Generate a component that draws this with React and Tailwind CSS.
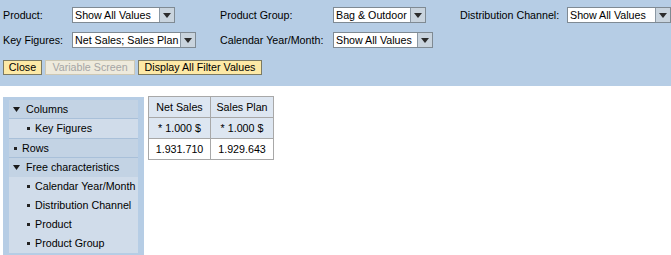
import React from 'react';

const Select = ({ value, width }) => (
  <div className={`flex h-[16px] border border-[#7f8a93] bg-white ${width}`}>
    <div className="flex-1 overflow-hidden whitespace-nowrap pl-[2px] leading-[14px] text-black">{value}</div>
    <div className="flex w-[15px] items-center justify-center border-l border-[#8b98a4] bg-[#c9d4de]">
      <svg width="8" height="5" viewBox="0 0 8 5">
        <path d="M0 0h8L4 5z" fill="#2b2b2b" />
      </svg>
    </div>
  </div>
);

const Arrow = () => (
  <svg width="7" height="5" viewBox="0 0 7 5" className="mr-[6px]">
    <path d="M0 0h7L3.5 5z" fill="#1a1a1a" />
  </svg>
);

const Dot = () => <span className="mr-[5px] inline-block h-[3px] w-[3px] bg-[#222]" />;

const TreeHeader = ({ label, open, last }) => (
  <div className={`flex h-[19px] items-center whitespace-nowrap bg-[#c3d3e4] ${open ? 'pl-[4px]' : 'pl-[5px]'} ${last ? '' : 'border-b border-[#a9c0d9]'}`}>
    {open ? <Arrow /> : <Dot />}
    <span>{label}</span>
  </div>
);

const TreeItem = ({ label }) => (
  <div className="flex h-[19px] items-center whitespace-nowrap bg-[#d0dcea] pl-[18px]">
    <Dot />
    <span>{label}</span>
  </div>
);

export default function App() {
  return (
    <div className="h-[255px] w-[671px] bg-white text-[10.7px] text-black" style={{ fontFamily: '"Liberation Sans", Arial, sans-serif' }}>
      {/* filter area */}
      <div className="h-[86px] bg-[#b6cde5] pl-[3px] pt-[7px]">
        <div className="flex h-[16px] items-center whitespace-nowrap">
          <div className="w-[69px]">Product:</div>
          <div className="w-[148px]"><Select value="Show All Values" width="w-[103px]" /></div>
          <div className="w-[113px]">Product Group:</div>
          <div className="w-[127px]"><Select value="Bag & Outdoor" width="w-[93px]" /></div>
          <div className="w-[107px]">Distribution Channel:</div>
          <Select value="Show All Values" width="w-[104px]" />
        </div>
        <div className="mt-[9px] flex h-[16px] items-center whitespace-nowrap">
          <div className="w-[69px]">Key Figures:</div>
          <div className="w-[148px]"><Select value="Net Sales; Sales Plan" width="w-[124px]" /></div>
          <div className="w-[113px]">Calendar Year/Month:</div>
          <Select value="Show All Values" width="w-[100px]" />
        </div>
        <div className="mt-[12px] flex gap-[3px] whitespace-nowrap">
          <div className="h-[15px] w-[39px] border border-[#7c7a62] bg-[#fde9a6] text-center leading-[13px]">Close</div>
          <div className="h-[15px] w-[90px] border border-[#cdc8b4] bg-[#eeeadc] text-center leading-[13px] text-[#a5a5a5]">Variable Screen</div>
          <div className="h-[15px] w-[124px] border border-[#7c7a62] bg-[#fde9a6] text-center leading-[13px]">Display All Filter Values</div>
        </div>
      </div>

      {/* lower area */}
      <div className="flex items-start pl-[3px] pt-[10px]">
        <div className="mt-[1px] w-[141px] bg-[#b6cde5] px-[6px] pb-[2px] pt-[3px]">
          <TreeHeader label="Columns" open />
          <div className="border-b border-[#a9c0d9]">
            <TreeItem label="Key Figures" />
          </div>
          <TreeHeader label="Rows" />
          <TreeHeader label="Free characteristics" open last />
          <TreeItem label="Calendar Year/Month" />
          <TreeItem label="Distribution Channel" />
          <TreeItem label="Product" />
          <TreeItem label="Product Group" />
        </div>

        <table className="ml-[4px] border-collapse border border-[#a8a8a8] text-center whitespace-nowrap">
          <tbody>
            <tr className="h-[21px] bg-[#dde6f1]">
              <td className="w-[62px] border border-[#a8a8a8]">Net Sales</td>
              <td className="w-[63px] border border-[#a8a8a8]">Sales Plan</td>
            </tr>
            <tr className="h-[21px] bg-[#dde6f1]">
              <td className="border border-[#a8a8a8]">* 1.000 $</td>
              <td className="border border-[#a8a8a8]">* 1.000 $</td>
            </tr>
            <tr className="h-[21px] bg-white">
              <td className="border border-[#a8a8a8]">1.931.710</td>
              <td className="border border-[#a8a8a8]">1.929.643</td>
            </tr>
          </tbody>
        </table>
      </div>
    </div>
  );
}
